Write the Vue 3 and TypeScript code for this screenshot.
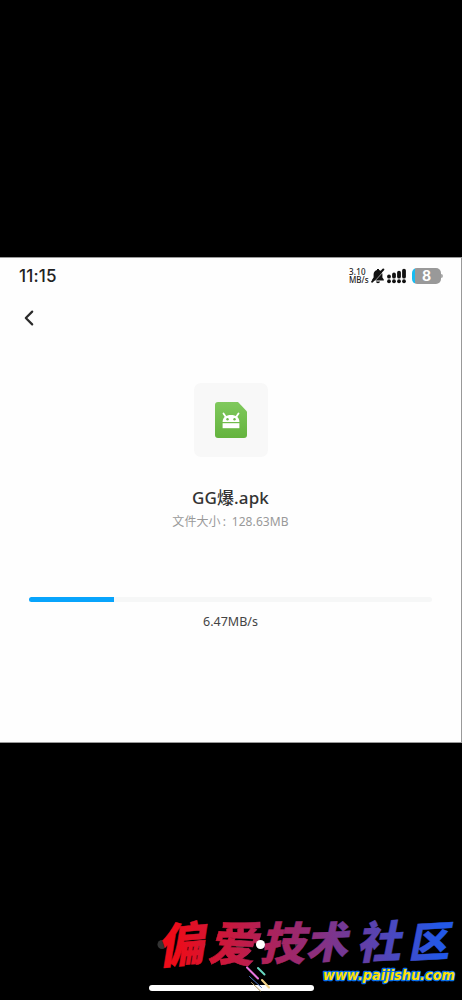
<script setup lang="ts">
const fileName = 'GG爆.apk'
const fileSize = '128.63MB'
const speed = '6.47MB/s'
const progress = 21.1
const brand: { glyph: string; x: number; y: number; size: number; tilt: number }[] = [
  { glyph: '偏', x: 180, y: 962, size: 47, tilt: -5 },
  { glyph: '爱', x: 232, y: 961, size: 48, tilt: 3 },
  { glyph: '技', x: 282, y: 960, size: 45, tilt: 0 },
  { glyph: '术', x: 326, y: 958, size: 42, tilt: -3 },
  { glyph: '社', x: 378, y: 958, size: 44, tilt: -3 },
  { glyph: '区', x: 428, y: 957, size: 41, tilt: -3 },
]
const bars = [1, 2, 3, 4]
</script>

<template>
  <main class="screen">
    <section class="panel">
      <header class="status">
        <span class="clock">11:15</span>
        <div class="indicators">
          <div class="net"><span>3.10</span><span>MB/s</span></div>
          <svg class="bell" width="14" height="16" viewBox="0 0 14 16">
            <path d="M1.200 12.600v-1.200L2.600 9.400V6.200C2.600 3.900 4.200 2.400 6 2V1h2v1c1.800.4 3.400 1.900 3.400 4.200v3.200l1.400 2v1.200ZM5 13.600h4c-.3 2.200-3.700 2.200-4 0Z" fill="#111" />
            <path d="M2.800 14 13.300 2.700" stroke="#fff" stroke-width=".7" />
            <path d="M1.200 13.700 12.300 1.500" stroke="#111" stroke-width="2" stroke-linecap="round" />
          </svg>
          <svg class="signal" width="20" height="16" viewBox="0 0 20 16">
            <g fill="none" stroke="#111" stroke-width="3.8" stroke-linecap="round">
              <path v-for="n in bars" :key="n" :d="`M${n * 5 - 3} ${8.4 - (n - 1) * 1.9}V8.7`" />
              <path v-for="n in bars" :key="'d' + n" :d="`M${n * 5 - 3} 13.2v.1`" />
            </g>
          </svg>
          <div class="battery"><span>8</span></div>
          <i class="tip"></i>
        </div>
      </header>
      <nav class="nav">
        <svg width="12" height="18" viewBox="0 0 12 18">
          <path d="m9.200 2.600-6.400 6.400 6.400 6.400" fill="none" stroke="#2b2b2b" stroke-width="2.2" stroke-linecap="round" stroke-linejoin="round" />
        </svg>
      </nav>
      <div class="tile">
        <svg width="32" height="37" viewBox="0 0 32 37">
          <defs>
            <linearGradient id="sheet" x1="0" y1="0" x2="0" y2="1">
              <stop offset="0" stop-color="#80c95d" />
              <stop offset="1" stop-color="#64b33e" />
            </linearGradient>
          </defs>
          <path d="M3 0h20l9 9.500v23.500a3 3 0 0 1-3 3H3a3 3 0 0 1-3-3V3a3 3 0 0 1 3-3Z" fill="url(#sheet)" />
          <path d="m10.500 14.500-2-3M21.500 14.500l2-3" fill="none" stroke="#fff" stroke-width="1.800" stroke-linecap="round" />
          <path d="M7.600 19.900c0-4.500 3.300-7 8.400-7s8.400 2.500 8.400 7Z" fill="#fff" />
          <path d="M7.600 21.200h16.800v5H7.600Z" fill="#fff" />
          <circle cx="12.500" cy="17.200" r="1.200" fill="#6eba4b" />
          <circle cx="19.500" cy="17.200" r="1.200" fill="#6eba4b" />
        </svg>
      </div>
      <h1 class="name">{{ fileName }}</h1>
      <p class="size"><span>文件大小</span><span class="colon">:</span><span>{{ fileSize }}</span></p>
      <div class="track"><div class="fill" :style="{ width: progress + '%' }"></div></div>
      <p class="speed">{{ speed }}</p>
    </section>

    <svg class="watermark" width="462" height="100" viewBox="0 900 462 100">
      <defs>
        <linearGradient id="brand" gradientUnits="userSpaceOnUse" x1="175" y1="0" x2="440" y2="0">
          <stop offset="0" stop-color="#ed0c19" />
          <stop offset=".45" stop-color="#9d286c" />
          <stop offset="1" stop-color="#2358e7" />
        </linearGradient>
      </defs>
      <g fill="#343434">
        <circle cx="162" cy="944.5" r="4.5" />
        <circle cx="201" cy="944.5" r="4.5" />
        <circle cx="240" cy="944.5" r="4.5" />
        <circle cx="299.5" cy="944.5" r="4.5" />
      </g>
      <rect x="149" y="985" width="165" height="6" rx="3" fill="#fff" />
      <g class="brand" fill="url(#brand)" stroke="url(#brand)">
        <text v-for="b in brand" :key="b.glyph" :x="b.x" :y="b.y" :font-size="b.size" :transform="`rotate(${b.tilt} ${b.x} 944)`" text-anchor="middle">{{ b.glyph }}</text>
      </g>
      <circle cx="260.5" cy="944.5" r="4.500" fill="#fff" />
      <g fill="none" stroke-linecap="round">
        <path d="m247 967.500 11 11" stroke="#e875df" stroke-width="2" />
        <path d="m258 968 6.500 6.500" stroke="#69d8c1" stroke-width="2" />
        <path d="m262 980 7 7.500" stroke="#f4d58b" stroke-width="2" />
        <path d="m249.500 976.500 12 11" stroke="#4b72bd" stroke-width="1" />
        <path d="m251.500 982.500 9 8.500" stroke="#ad975e" stroke-width="1" />
      </g>
      <text class="url" x="323" y="980" textLength="132" lengthAdjust="spacingAndGlyphs">www.paijishu.com</text>
    </svg>
  </main>
</template>

<style>
body { background: #000; }
</style>

<style scoped>
.screen {
  position: relative;
  width: 462px;
  height: 1000px;
  padding-top: 257px;
  box-sizing: border-box;
  background: #000;
  overflow: hidden;
  font-family: "Noto Sans", "Noto Sans CJK SC", sans-serif;
}
.panel {
  height: 486px;
  box-sizing: border-box;
  background: #fefefe;
  border: solid #999;
  border-width: 1px 1px 1px 0;
  display: flex;
  flex-direction: column;
  align-items: center;
}
.status {
  align-self: stretch;
  height: 36px;
  padding: 0 18px 0 19px;
  display: flex;
  align-items: center;
  justify-content: space-between;
  color: #222;
}
.clock { font: 500 17px/20px Inter, sans-serif; letter-spacing: .15px; }
.indicators { display: flex; align-items: center; }
.net {
  width: 22px;
  display: flex;
  flex-direction: column;
  font: 500 8px/8px "Noto Sans", sans-serif;
}
.net span:first-child { letter-spacing: .2px; }
.bell { margin-right: 2px; }
.signal { margin-right: 5px; }
.battery {
  width: 29px;
  height: 16px;
  border-radius: 5px;
  background: linear-gradient(90deg, #17bcf2 3px, #999 3px);
  color: #fff;
  text-align: center;
  font: 700 14px/16px Inter, sans-serif;
}
.tip { width: 2px; height: 4px; background: #aaa; border-radius: 0 2px 2px 0; }
.nav { align-self: stretch; height: 18px; padding-left: 23px; margin-top: 15px; }
.nav svg { display: block; }
.tile {
  margin-top: 56px;
  width: 74px;
  height: 74px;
  border-radius: 7px;
  background: #f8f8f8;
  display: flex;
  align-items: center;
  justify-content: center;
}
.name {
  margin: 28px 0 0;
  font: 500 17px/25px "Noto Sans", "Noto Sans CJK SC", sans-serif;
  color: #333;
  letter-spacing: .1px;
}
.size {
  margin: 2px 0 0;
  display: flex;
  font: 12px/20px "Noto Sans", "Noto Sans CJK SC", sans-serif;
  color: #999;
  letter-spacing: .1px;
}
.colon { width: 11px; padding-left: 2px; box-sizing: border-box; }
.track {
  width: 403px;
  height: 5px;
  margin-top: 65px;
  border-radius: 2.5px;
  background: #f6f7f7;
  overflow: hidden;
}
.fill { height: 100%; background: #08a4fc; }
.speed {
  margin: 10px 0 0;
  font: 12.5px/20px "Noto Sans", sans-serif;
  color: #444;
}
.watermark { position: absolute; left: 0; bottom: 0; overflow: visible; }
.brand {
  font-family: "Noto Sans CJK SC", sans-serif;
  font-weight: 900;
  font-style: italic;
  stroke-width: .5;
}
.url {
  font: italic 700 14px "DejaVu Sans", sans-serif;
  fill: #ffe100;
  stroke: #0870e8;
  stroke-width: 2.5;
  stroke-linejoin: round;
  paint-order: stroke;
}
</style>
